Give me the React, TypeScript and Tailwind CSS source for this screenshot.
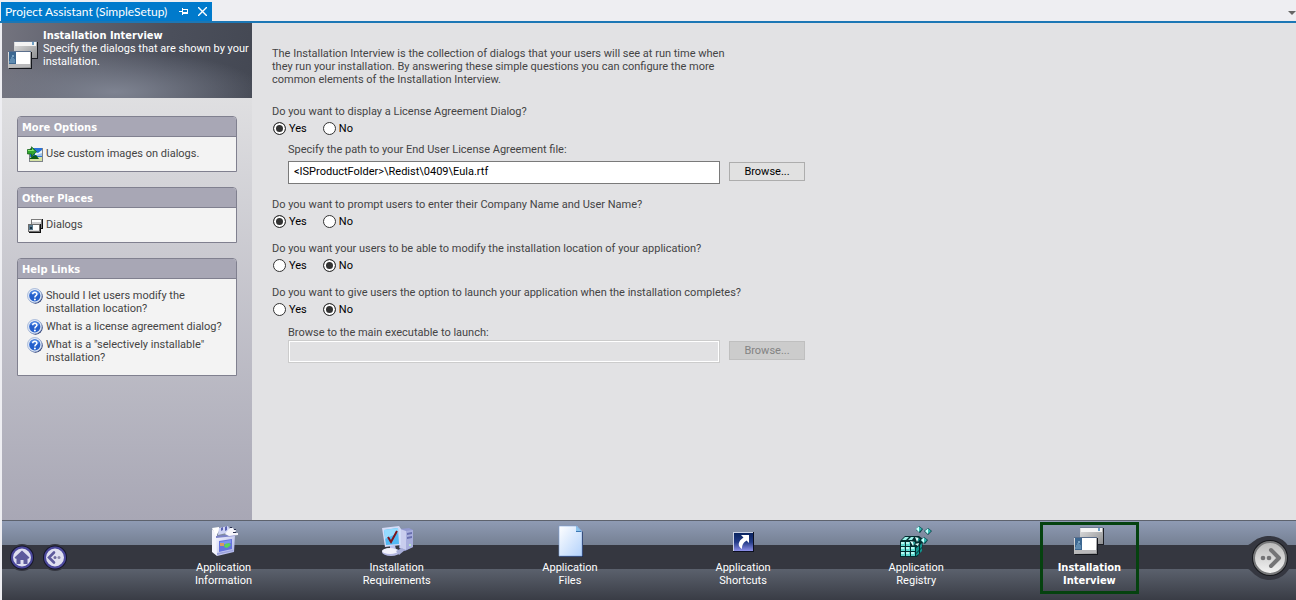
import { useState, type ReactNode } from "react"

interface PanelProps {
  title: string
  children: ReactNode
}

interface YesNoProps {
  name: string
  question: string
  value: string
  onChange: (value: string) => void
}

interface PathFieldProps {
  id: string
  value?: string
  disabled?: boolean
}

function WindowsArt({ className }: { className: string }) {
  return (
    <svg viewBox="0 0 30 28" className={className} shapeRendering="crispEdges" aria-hidden="true">
      <defs>
        <linearGradient id="win" x1="0" y1="0" x2="1" y2="1">
          <stop offset="0" stopColor="#e2e2e2" />
          <stop offset="1" stopColor="#8f9092" />
        </linearGradient>
      </defs>
      <rect x="7" y="1" width="23" height="17" fill="#1c1e24" />
      <rect x="6" y="0" width="23" height="17" fill="url(#win)" />
      <rect x="6" y="0" width="23" height="1" fill="#6d7a90" />
      <rect x="7" y="1" width="21" height="4" fill="#f4f4f4" />
      <rect x="24" y="1" width="2" height="3" fill="#6f9fc4" />
      <rect x="1" y="11" width="23" height="17" fill="#14161c" />
      <rect x="0" y="10" width="23" height="17" fill="url(#win)" />
      <rect x="0" y="10" width="23" height="1" fill="#5b6f8c" />
      <rect x="8" y="11" width="14" height="12" fill="#fff" />
      <rect x="1" y="11" width="7" height="12" fill="#3c6791" />
      <path d="M1 21l3-6 3 4v3H1z" fill="#5f8bb0" />
      <path d="M4 14h2v2H4z" fill="#7ba3c2" />
      <rect x="1" y="23" width="21" height="3" fill="#b9b9bb" />
    </svg>
  )
}

function ImageIcon() {
  return (
    <svg viewBox="0 0 16 16" className="size-4 shrink-0" aria-hidden="true">
      <path d="M3 2h13v14H2V9z" fill="#7d8389" />
      <path d="M5 2h10v13H3V8z" fill="#2a72d8" />
      <path d="M8 6l3 1 4-3v5H8z" fill="#eaf5fb" />
      <path d="M9 9l6-2v3h-5z" fill="#9fc6ea" />
      <path d="M3 11h12v4H3z" fill="#d5e2a4" />
      <path d="M2 13l4-3 3-1 3 4H2z" fill="#0c5a14" />
      <path d="M.5 3.500h4V.700l5 5-5 5V8h-4z" fill="#2fa52f" stroke="#0b5a10" strokeWidth=".7" />
      <path d="M1 4h4V2.500L7.500 5H1z" fill="#8be86c" />
    </svg>
  )
}

function DialogsIcon() {
  return (
    <svg viewBox="0 0 16 16" className="size-4 shrink-0" shapeRendering="crispEdges" aria-hidden="true">
      <path d="M4 2h12v10H4z" fill="#111" />
      <path d="M4 2h11v9H4z" fill="#7b7b7b" />
      <path d="M5 3h9v2H5z" fill="#fff" />
      <path d="M5 5h9v5H5z" fill="#cfcfd1" />
      <path d="M2 7h12v9H2z" fill="#111" />
      <path d="M1 7h12v8H1z" fill="#6c6c6c" />
      <path d="M6 8h6v5H6z" fill="#fff" />
      <path d="M2 8h4v5H2z" fill="#5a7b90" />
      <path d="M3 10h2v2H3z" fill="#1c3344" />
      <path d="M2 13h10v1H2z" fill="#ddd" />
    </svg>
  )
}

function HelpIcon() {
  return (
    <svg viewBox="0 0 16 16" className="size-4 shrink-0" aria-hidden="true">
      <circle cx="8.500" cy="8.500" r="7.200" fill="#20306a" />
      <circle cx="7.700" cy="7.700" r="7.200" fill="#dfe8f6" stroke="#90a8d0" strokeWidth=".7" />
      <circle cx="7.800" cy="7.800" r="5.600" fill="#2560cc" />
      <path d="M3 6a5 5 0 0 1 9.600 0C9 8 6 5 3 6z" fill="#4b85e4" />
      <path d="M5.700 6.200c0-2.800 4.400-2.600 4.200 0-.1 1.500-2 1.500-2 3.200" fill="none" stroke="#fff" strokeWidth="1.500" />
      <circle cx="7.900" cy="11.400" r="1" fill="#fff" />
    </svg>
  )
}

function PackageIcon() {
  return (
    <svg viewBox="0 0 32 32" className="size-8" aria-hidden="true">
      <defs>
        <linearGradient id="pkg" x1="0" y1="0" x2="1" y2="1">
          <stop offset="0" stopColor="#f6f7ff" />
          <stop offset="1" stopColor="#a4abe4" />
        </linearGradient>
      </defs>
      <path d="M4 4l5 6v21l-5-4z" fill="#f3f4fd" />
      <path d="M8 12l19-2-1 17-17 4z" fill="url(#pkg)" />
      <path d="M8 11l19-2v2L8 13z" fill="#7b82c8" />
      <path d="M4 3l7-1v4l-3 5z" fill="#fff" />
      <path d="M11 3l9-2 3 6-13 3z" fill="#cdd3f4" />
      <path d="M13 3l2-1v3l-2 1zM17 2l2-1v4l-2 1z" fill="#5a62b0" />
      <path d="M20 5l2-2h3l1 2h2l-1 3h3v2l-9 1-4-2z" fill="#f6f6fb" />
      <path d="M22 2h2v1h-2zM26 4h2v1h-2zM25 7h3v1h-3z" fill="#2c3150" />
      <path d="M11 16l13-2v10l-13 3z" fill="#6472dc" />
      <path d="M12 17l11-2v3l-11 2z" fill="#7d92ee" />
      <path d="M12 18h4v3h-4z" fill="#d69a62" />
      <path d="M17 19l4-1 2 2-4 3-3-1z" fill="#57d45a" />
      <path d="M9 28l16-3v1L9 30z" fill="#9aa0dc" />
    </svg>
  )
}

function ComputerIcon() {
  return (
    <svg viewBox="0 0 32 32" className="size-8" aria-hidden="true">
      <path d="M19 4l9-1 4 2v17l-8 4-6-3z" fill="#9299d0" />
      <path d="M19 4l6 2v19l-6-2z" fill="#c9cdee" />
      <path d="M25 6l7-1v17l-7 3z" fill="#a8aedd" />
      <path d="M26 8l5-1v2l-5 1zM26 12l5-1v2l-5 1z" fill="#696fb0" />
      <path d="M28 19h2v2h-2z" fill="#b9e6c6" />
      <path d="M1 3l17-2 2 3v16L4 22z" fill="#d3dbf7" />
      <path d="M3 5l14-2 1 16-13 1z" fill="#51b8f4" />
      <path d="M3 5l14-2v5L4 14z" fill="#96dcff" />
      <path d="M9 21l5-1 1 5H9z" fill="#bcc2ee" />
      <ellipse cx="10" cy="27" rx="9" ry="4" fill="#b4b8e1" />
      <ellipse cx="9" cy="26" rx="8" ry="3" fill="#f2f2fc" />
      <path d="M15 26l6-3 3 2-6 5z" fill="#a7add7" />
      <path d="M7 12l3 5L16 6" fill="none" stroke="#7d141c" strokeWidth="2" />
    </svg>
  )
}

function FileIcon() {
  return (
    <svg viewBox="0 0 32 32" className="size-8" aria-hidden="true">
      <defs>
        <linearGradient id="doc" x1="0" y1="0" x2="1" y2="1">
          <stop offset="0" stopColor="#fff" />
          <stop offset="1" stopColor="#b3d2fb" />
        </linearGradient>
      </defs>
      <path d="M6 2h18l5 5v25H6z" fill="#1c2c55" />
      <path d="M5 1h18l5 5v25H5z" fill="url(#doc)" stroke="#7ea1d8" strokeWidth=".6" />
      <path d="M22 1l6 6h-6z" fill="#3d78b4" />
      <path d="M22 1v5h5z" fill="#8cc3ec" />
    </svg>
  )
}

function ShortcutIcon() {
  return (
    <svg viewBox="0 0 32 32" className="size-8" aria-hidden="true">
      <defs>
        <linearGradient id="cut" x1="0" y1="0" x2="0" y2="1">
          <stop offset="0" stopColor="#092460" />
          <stop offset=".5" stopColor="#223a86" />
          <stop offset="1" stopColor="#8e90ea" />
        </linearGradient>
      </defs>
      <path d="M6 7h21v20H6z" fill="#0c0f20" />
      <path d="M6 7h20v19H6z" fill="#ccd3e4" />
      <path d="M7 8h19v18H7z" fill="url(#cut)" />
      <path d="M14 10h8v8l-2.500-2.500C16 18 15 20 15 24c-5-3-4-8 1.500-11.500z" fill="#fff" />
    </svg>
  )
}

function RegistryIcon() {
  return (
    <svg viewBox="0 0 32 32" className="size-8" aria-hidden="true">
      <path d="M0 16l5-5h14l4 3-1 11-5 7H0z" fill="#032d30" />
      <path d="M1 17h4v4H1zM6 17h4v4H6zM1 22h4v4H1zM6 22h4v4H6zM11 22h4v4h-4zM1 27h4v4H1zM6 27h4v4H6zM11 27h4v4h-4z" fill="#5fd8cf" />
      <path d="M1 17h3v2H1zM6 17h3v2H6zM1 22h3v2H1zM6 22h3v2H6zM11 22h3v2h-3zM1 27h3v2H1zM6 27h3v2H6zM11 27h3v2h-3z" fill="#b5f7f1" />
      <path d="M2 15l3-3h4l-3 3zM8 15l3-3h3l-2 3z" fill="#9df3ea" />
      <path d="M16 23l3-2v4l-3 3zM16 29l3-3v3l-3 2zM20 20l2-2v4l-2 2zM20 25l2-2v3l-2 2z" fill="#12938d" />
      <path d="M10 16l5 1-2 4zM15 12l4 1-2 4zM15 19l4-1-1 3z" fill="#d9fffb" />
      <path d="M13 17h2l-1 4zM18 13l2 1-2 3z" fill="#139a95" />
      <path d="M19 1l4 3-3 4-4-3zM28 3l4 3-4 4-4-4zM24 12l4 3-3 4-5-3z" fill="#064347" />
      <path d="M19 1.500l3 2.500-3 3-3-3zM28 3.500l3 2.500-3 3-3-3zM24 12.500l3 2.500-3 3-3-3z" fill="#36b8b3" />
      <path d="M19 1.500v5.500l-3-3zM28 3.500v5.500l-3-3zM24 12.500v5.500l-3-3z" fill="#c8fffa" />
    </svg>
  )
}

function HomeIcon() {
  return (
    <svg viewBox="0 0 28 28" className="size-7" aria-hidden="true">
      <circle cx="14" cy="13.500" r="13.500" fill="#353740" />
      <circle cx="14" cy="13.500" r="12" fill="#15152a" />
      <circle cx="14" cy="13.500" r="10" fill="#dfdff0" stroke="#4b489c" strokeWidth="2" />
      <path d="M14 6.500l7.500 7-1.500 1.500-.5-.5V20h-4v-4h-3v4h-4v-5.500l-.5.500-1.500-1.500z" fill="#5d5a9c" />
    </svg>
  )
}

function BackIcon() {
  return (
    <svg viewBox="0 0 28 28" className="size-7" aria-hidden="true">
      <circle cx="14" cy="13.500" r="13.500" fill="#353740" />
      <circle cx="14" cy="13.500" r="12" fill="#15152a" />
      <circle cx="14" cy="13.500" r="10" fill="#dfdff0" stroke="#4b489c" strokeWidth="2" />
      <path d="M13 8.500l-5 5 5 5" fill="none" stroke="#5d5a9c" strokeWidth="2.600" strokeLinecap="round" />
      <circle cx="14" cy="13.500" r="1.500" fill="#6d6a9e" />
      <circle cx="18" cy="13.500" r="1.500" fill="#8a88ae" />
    </svg>
  )
}

function NextIcon() {
  return (
    <svg viewBox="0 0 44 44" className="size-11" aria-hidden="true">
      <defs>
        <linearGradient id="next" x1="0" y1="0" x2="0" y2="1">
          <stop offset="0" stopColor="#b9b9b9" />
          <stop offset="1" stopColor="#f4f4f4" />
        </linearGradient>
      </defs>
      <path d="M0 9C4 8 8 0 22 0a22 22 0 0 1 0 44C8 44 4 34 0 33z" fill="#353740" />
      <circle cx="22" cy="22" r="18" fill="#17181c" />
      <circle cx="22" cy="22" r="16" fill="url(#next)" stroke="#77787a" strokeWidth="2" />
      <path d="M23 14l8 8-8 8" fill="none" stroke="#747476" strokeWidth="4" strokeLinecap="round" strokeLinejoin="round" />
      <circle cx="15" cy="22" r="2.300" fill="#747476" />
      <circle cx="21" cy="22" r="2.300" fill="#747476" />
    </svg>
  )
}

function Panel({ title, children }: PanelProps) {
  return (
    <section className="border border-[#80808f] rounded-t-[4px] bg-[#f3f3f3]">
      <h2 className="h-5 px-1 pt-1 font-bold font-['DejaVu_Sans_Condensed',sans-serif] text-white bg-[#a8a7b5] border-b border-[#80808f] rounded-t-[3px]">{title}</h2>
      <ul className="flex flex-col gap-[5px] pl-[9px] pr-2 pt-[10px] pb-[11px]">{children}</ul>
    </section>
  )
}

function PanelLink({ icon, children }: { icon: ReactNode; children: ReactNode }) {
  return (
    <li>
      <a href="#" className="flex items-start gap-[3px] text-[#444]">
        <span className="h-[13px] -mt-px">{icon}</span>
        <span>{children}</span>
      </a>
    </li>
  )
}

function YesNo({ name, question, value, onChange }: YesNoProps) {
  return (
    <fieldset>
      <legend>{question}</legend>
      <div className="flex gap-4 pt-1 pl-px text-black">
        {["Yes", "No"].map((option) => (
          <label key={option} className="flex items-center gap-[3px]">
            <input
              type="radio"
              name={name}
              value={option}
              checked={value === option}
              onChange={() => onChange(option)}
              className="appearance-none size-[13px] rounded-full border border-[#333] bg-white checked:bg-[#333] checked:shadow-[inset_0_0_0_2px_#fff]"
            />
            {option}
          </label>
        ))}
      </div>
    </fieldset>
  )
}

function PathField({ id, value, disabled }: PathFieldProps) {
  return (
    <div className="flex items-start gap-[9px]">
      <input
        id={id}
        type="text"
        defaultValue={value}
        disabled={disabled}
        className="w-[432px] h-[23px] px-[5px] pb-[2px] border border-[#7a7a7a] bg-white text-black disabled:bg-[#e1e1e3] disabled:border-[#ccc] disabled:shadow-[inset_0_0_0_1px_#fff]"
      />
      <button
        type="button"
        disabled={disabled}
        className="mt-px w-[76px] h-[19px] border border-[#adadad] bg-[#e1e1e1] text-black disabled:bg-[#ccc] disabled:border-[#bfbfbf] disabled:text-[#838383]"
      >
        Browse...
      </button>
    </div>
  )
}

const steps = [
  { label: ["Application", "Information"], icon: <PackageIcon /> },
  { label: ["Installation", "Requirements"], icon: <ComputerIcon /> },
  { label: ["Application", "Files"], icon: <FileIcon /> },
  { label: ["Application", "Shortcuts"], icon: <ShortcutIcon /> },
  { label: ["Application", "Registry"], icon: <RegistryIcon /> },
  { label: ["Installation", "Interview"], icon: <WindowsArt className="w-[30px] h-7 my-[2px]" />, active: true },
]

export default function App() {
  const [license, setLicense] = useState("Yes")
  const [names, setNames] = useState("Yes")
  const [location, setLocation] = useState("No")
  const [launch, setLaunch] = useState("No")

  return (
    <div className="min-h-screen flex flex-col bg-[#eeeef2] font-[Roboto,sans-serif] text-[11px] leading-[13px] text-[#444]">
      <header className="flex items-end justify-between h-[23px] pl-px border-b-2 border-[#1c77b5]">
        <div className="flex items-center h-[19px] pl-1 pr-[5px] bg-[#007acc] text-white text-[12px] font-[Lato,sans-serif]">
          <span>Project Assistant (SimpleSetup)</span>
          <button aria-label="Pin" className="ml-3">
            <svg viewBox="0 0 9 7" className="w-[9px] h-[7px]" fill="none" stroke="#fff" shapeRendering="crispEdges">
              <path d="M0 3.500h3M3.500 0v7M4 1.500h4.500v4H4M4 4.500h4" />
            </svg>
          </button>
          <button aria-label="Close" className="ml-[10px]">
            <svg viewBox="0 0 9 9" className="size-[9px]" fill="none" stroke="#fff" strokeWidth="1.400">
              <path d="M0 0l9 9M9 0L0 9" />
            </svg>
          </button>
        </div>
        <button aria-label="Window list" className="pb-[6px]">
          <svg viewBox="0 0 8 4" className="w-2 h-1" fill="#666">
            <path d="M0 0h8L4 4z" />
          </svg>
        </button>
      </header>

      <div className="flex-1 flex pl-[2px]">
        <aside className="w-[250px] shrink-0 flex flex-col">
          <div className="flex h-[75px] pl-[6px] pt-[6px] text-white bg-[radial-gradient(ellipse_60%_55%_at_45%_92%,#7e8391_0%,#7e839100_100%),linear-gradient(100deg,#74747f_0%,#5c5f6b_35%,#4b4f5b_65%,#444853_100%)]">
            <WindowsArt className="w-[30px] h-7 mt-3 shrink-0" />
            <div className="pl-[5px] whitespace-nowrap">
              <h1 className="font-bold font-['DejaVu_Sans_Condensed',sans-serif]">Installation Interview</h1>
              <p>
                Specify the dialogs that are shown by your
                <br />
                installation.
              </p>
            </div>
          </div>
          <div className="flex-1 flex flex-col gap-[15px] px-[15px] pt-[18px] bg-linear-to-b from-[#dfdfe1] to-[#a8a7b5]">
            <Panel title="More Options">
              <PanelLink icon={<ImageIcon />}>Use custom images on dialogs.</PanelLink>
            </Panel>
            <Panel title="Other Places">
              <PanelLink icon={<DialogsIcon />}>Dialogs</PanelLink>
            </Panel>
            <Panel title="Help Links">
              <PanelLink icon={<HelpIcon />}>
                Should I let users modify the
                <br />
                installation location?
              </PanelLink>
              <PanelLink icon={<HelpIcon />}>What is a license agreement dialog?</PanelLink>
              <PanelLink icon={<HelpIcon />}>
                What is a "selectively installable"
                <br />
                installation?
              </PanelLink>
            </Panel>
          </div>
        </aside>

        <main className="flex-1 px-5 pt-6 bg-[#e2e2e4]">
          <p>
            The Installation Interview is the collection of dialogs that your users will see at run time when
            <br />
            they run your installation. By answering these simple questions you can configure the more
            <br />
            common elements of the Installation Interview.
          </p>
          <form className="flex flex-col gap-[14px] pt-[19px]">
            <div>
              <YesNo name="license" question="Do you want to display a License Agreement Dialog?" value={license} onChange={setLicense} />
              <div className="pl-4 pt-2">
                <label htmlFor="eula" className="block pb-[5px]">Specify the path to your End User License Agreement file:</label>
                <PathField id="eula" value="<ISProductFolder>\Redist\0409\Eula.rtf" disabled={license === "No"} />
              </div>
            </div>
            <YesNo name="names" question="Do you want to prompt users to enter their Company Name and User Name?" value={names} onChange={setNames} />
            <YesNo name="location" question="Do you want your users to be able to modify the installation location of your application?" value={location} onChange={setLocation} />
            <div>
              <YesNo name="launch" question="Do you want to give users the option to launch your application when the installation completes?" value={launch} onChange={setLaunch} />
              <div className="pl-4 pt-[10px]">
                <label htmlFor="exe" className="block pb-px">Browse to the main executable to launch:</label>
                <PathField id="exe" disabled={launch === "No"} />
              </div>
            </div>
          </form>
        </main>
      </div>

      <footer className="ml-[2px] flex items-center h-20 pb-[5px] border-t border-[#5d626d] bg-[linear-gradient(#8f9bb4_0px,#758093_24px,#353740_24px,#353740_48px,#5b616d_48px,#393c45_79px)]">
        <div className="flex items-center gap-[5px] w-[135px] pl-[6px]">
          <button aria-label="Home"><HomeIcon /></button>
          <button aria-label="Back"><BackIcon /></button>
        </div>
        <nav className="flex-1 grid grid-cols-6 justify-items-center">
          {steps.map(({ label, icon, active }) => (
            <button
              key={label.join(" ")}
              className={
                active
                  ? "flex flex-col items-center w-[99px] h-[72px] border-3 border-[#05420f] text-white font-bold font-['DejaVu_Sans_Condensed',sans-serif]"
                  : "flex flex-col items-center w-[99px] h-[72px] border-3 border-transparent text-white"
              }
            >
              {icon}
              <span className="pt-1">
                {label[0]}
                <br />
                {label[1]}
              </span>
            </button>
          ))}
        </nav>
        <div className="w-[120px] pr-1 flex justify-end">
          <button aria-label="Next"><NextIcon /></button>
        </div>
      </footer>
    </div>
  )
}
